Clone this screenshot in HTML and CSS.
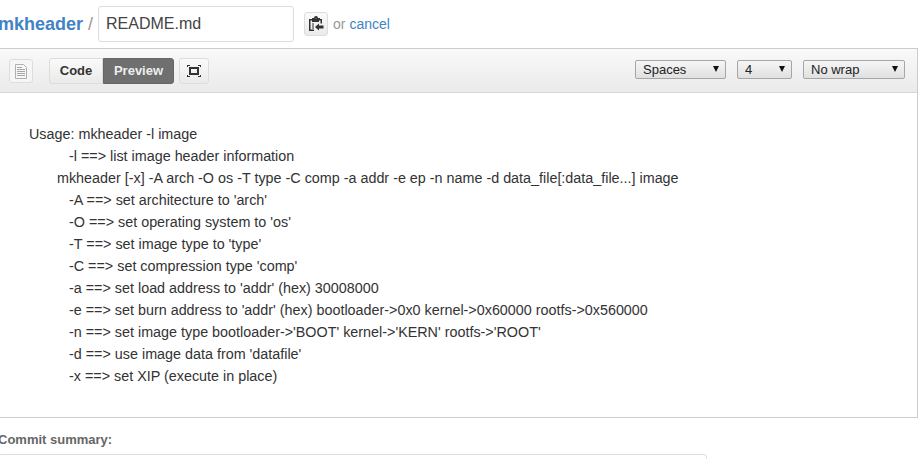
FILE: index.html
```html
<!DOCTYPE html>
<html lang="en">
<head>
    <meta charset="UTF-8">
    <meta name="viewport" content="width=device-width, initial-scale=1.0">
    <title>Editing README.md</title>
    <link rel="stylesheet" href="styles.css">
</head>
<body>
    <div class="page">
        <div class="breadcrumb">
            <a href="#" class="repo-name">mkheader</a>
            <span class="separator">/</span>
            <input type="text" class="filename" value="README.md">
            <button class="paste-btn" aria-label="Paste">
                <svg width="16" height="16" viewBox="0 0 16 16">
                    <path fill="#333" fill-rule="evenodd" d="M1 3h3V2h2a2 2 0 0 1 4 0h2v1h2v4.500h-1.500V4.500H11V6H4V4.500H2.500v9H6V15H1zM7.300 2.500a.8.8 0 0 0 1.400 0z"/>
                    <path fill="#333" d="M4 7.500h2v1H4zM4 9.500h2v1H4zM4 11.500h2v1H4z"/>
                    <path fill="#333" d="M15.500 9.500H11V7.500L7 11l4 3.500v-2h4.500z"/>
                </svg>
            </button>
            <span class="cancel-text">or <a href="#">cancel</a></span>
        </div>

        <div class="editor">
            <div class="toolbar">
                <button class="doc-btn" aria-label="File">
                    <svg width="12" height="15" viewBox="0 0 12 15">
                        <path fill="#f7f7f7" stroke="#b0b0b0" d="M.5.500h8l3 3v11H.5z"/>
                        <path stroke="#a8a8a8" d="M2 5.500h8M2 7.500h8M2 9.500h8M2 11.500h8M2 3.500h5"/>
                    </svg>
                </button>
                <div class="mode-group">
                    <button class="mode-btn">Code</button>
                    <button class="mode-btn mode-active">Preview</button>
                </div>
                <button class="full-btn" aria-label="Fullscreen">
                    <svg width="14" height="12" viewBox="0 0 14 12">
                        <path fill="#333" fill-rule="evenodd" d="M2 2h10v8H2zM4 4v4h6V4z"/>
                        <path fill="#333" d="M0 0h3v1H1v1H0zM11 0h3v2h-1V1h-2zM0 10h1v1h2v1H0zM13 10h1v2h-3v-1h2z"/>
                    </svg>
                </button>
                <div class="options">
                    <label class="select-wrap wrap-indent"><select><option>Spaces</option></select></label>
                    <label class="select-wrap wrap-size"><select><option>4</option></select></label>
                    <label class="select-wrap wrap-mode"><select><option>No wrap</option></select></label>
                </div>
            </div>

            <div class="preview">
                <p>Usage: mkheader -l image</p>
                <p class="opt">-l ==&gt; list image header information</p>
                <p class="cmd">mkheader [-x] -A arch -O os -T type -C comp -a addr -e ep -n name -d data_file[:data_file...] image</p>
                <p class="opt">-A ==&gt; set architecture to 'arch'</p>
                <p class="opt">-O ==&gt; set operating system to 'os'</p>
                <p class="opt">-T ==&gt; set image type to 'type'</p>
                <p class="opt">-C ==&gt; set compression type 'comp'</p>
                <p class="opt">-a ==&gt; set load address to 'addr' (hex) 30008000</p>
                <p class="opt">-e ==&gt; set burn address to 'addr' (hex) bootloader-&gt;0x0 kernel-&gt;0x60000 rootfs-&gt;0x560000</p>
                <p class="opt">-n ==&gt; set image type bootloader-&gt;'BOOT' kernel-&gt;'KERN' rootfs-&gt;'ROOT'</p>
                <p class="opt">-d ==&gt; use image data from 'datafile'</p>
                <p class="opt">-x ==&gt; set XIP (execute in place)</p>
            </div>
        </div>

        <div class="commit">
            <label for="summary">Commit summary:</label>
            <input type="text" id="summary">
        </div>
    </div>
</body>
</html>
```

FILE: styles.css
```css
* {
    margin: 0;
    padding: 0;
    box-sizing: border-box;
    font-family: 'Liberation Sans', Arial, sans-serif;
}

html, body {
    height: 459px;
    overflow: hidden;
    background: #fff;
}

.page {
    width: 920px;
    height: 459px;
    margin-left: -2px;
    overflow: hidden;
    color: #333;
}

a {
    color: #4183c4;
    text-decoration: none;
}

button {
    cursor: pointer;
}

.breadcrumb {
    height: 48px;
    padding-top: 6px;
    display: flex;
    align-items: flex-start;
}

.repo-name {
    font-size: 18px;
    font-weight: bold;
    line-height: 36px;
}

.separator {
    margin-left: 5px;
    font-size: 18px;
    line-height: 36px;
    color: #999;
}

.filename {
    width: 196px;
    height: 36px;
    margin-left: 5px;
    padding: 0 7px;
    border: 1px solid #ddd;
    border-radius: 3px;
    font-size: 16px;
    color: #444;
    outline: none;
}

.paste-btn {
    width: 24px;
    height: 24px;
    margin: 6px 0 0 10px;
    display: flex;
    align-items: center;
    justify-content: center;
    background: linear-gradient(#fafafa, #eaeaea);
    border: 1px solid #ddd;
    border-radius: 3px;
}

.cancel-text {
    margin-left: 5px;
    font-size: 14px;
    line-height: 36px;
    color: #999;
}

.editor {
    border: 1px solid #ccc;
    border-left: none;
    height: 370px;
}

.toolbar {
    height: 44px;
    padding: 9px 12px 0 11px;
    display: flex;
    align-items: flex-start;
    background: linear-gradient(#f9f9f9, #eaeaea);
    border-bottom: 1px solid #d8d8d8;
}

.doc-btn {
    width: 24px;
    height: 24px;
    margin-top: 1px;
    display: flex;
    align-items: center;
    justify-content: center;
    background: #f6f6f6;
    border: 1px solid #ddd;
    border-radius: 3px;
}

.mode-group {
    margin-left: 16px;
    display: flex;
}

.mode-btn {
    height: 26px;
    width: 54px;
    padding-bottom: 2px;
    font-size: 13px;
    font-weight: bold;
    color: #333;
    background: linear-gradient(#fafafa, #eaeaea);
    border: 1px solid #ddd;
    border-radius: 3px 0 0 3px;
}

.mode-active {
    width: 71px;
    color: #eee;
    background: #6f6f6f;
    border-color: #666;
    border-radius: 0 3px 3px 0;
}

.full-btn {
    width: 30px;
    height: 26px;
    margin-left: 5px;
    display: flex;
    align-items: center;
    justify-content: center;
    background: linear-gradient(#fafafa, #eaeaea);
    border: 1px solid #ddd;
    border-radius: 3px;
}

.options {
    margin-left: auto;
    margin-top: 2px;
    display: flex;
    gap: 11px;
}

.select-wrap {
    display: block;
    height: 19px;
    position: relative;
}

.select-wrap::after {
    content: "";
    position: absolute;
    right: 7px;
    top: 6px;
    border-left: 3px solid transparent;
    border-right: 3px solid transparent;
    border-top: 6px solid #111;
}

.wrap-indent { width: 91px; }
.wrap-size { width: 55px; }
.wrap-mode { width: 102px; }

.select-wrap select {
    appearance: none;
    display: block;
    width: 100%;
    height: 19px;
    padding-left: 7px;
    font-size: 13px;
    color: #222;
    background: linear-gradient(#f6f6f6, #e0e0e0);
    border: 1px solid #a6a6a6;
    border-radius: 2px;
}

.preview {
    padding: 30px 0 0 31px;
    font-size: 14.35px;
    line-height: 22px;
    color: #333;
}

.preview .opt {
    padding-left: 40px;
}

.preview .cmd {
    padding-left: 28px;
}

.commit {
    margin-top: 13px;
}

.commit label {
    display: block;
    height: 23px;
    line-height: 18px;
    font-size: 13px;
    font-weight: bold;
    color: #666;
}

.commit input {
    display: block;
    width: 709px;
    height: 34px;
    border: 1px solid #ddd;
    border-radius: 3px;
    background: #fff;
}
```
